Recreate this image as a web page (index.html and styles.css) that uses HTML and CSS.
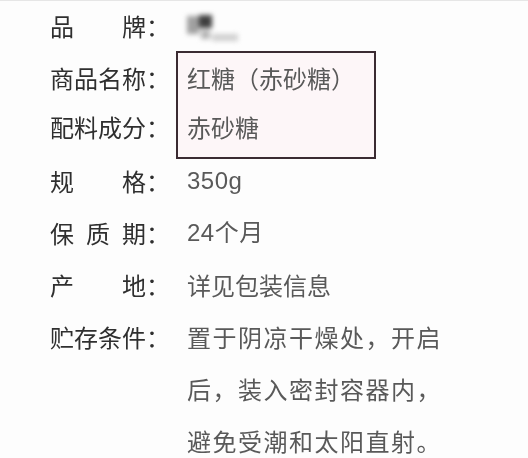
FILE: index.html
```html
<!DOCTYPE html>
<html lang="zh-CN">
<head>
<meta charset="utf-8">
<title>红糖 商品信息</title>
<link rel="stylesheet" href="styles.css">
</head>
<body>
<div class="sheet">
  <div class="row">
    <span class="k"><span class="kj">品牌</span>：</span>
    <span class="v"><span class="brand"><span class="b1"></span><span class="b2"></span><span class="b3"></span></span></span>
  </div>
  <div class="group">
    <div class="keys">
      <div class="k">商品名称：</div>
      <div class="k">配料成分：</div>
    </div>
    <div class="box">
      <div class="bv">红糖（赤砂糖）</div>
      <div class="bv">赤砂糖</div>
    </div>
  </div>
  <div class="row">
    <span class="k"><span class="kj">规格</span>：</span>
    <span class="v num">350g</span>
  </div>
  <div class="row">
    <span class="k"><span class="kj">保质期</span>：</span>
    <span class="v num">24个月</span>
  </div>
  <div class="row">
    <span class="k"><span class="kj">产地</span>：</span>
    <span class="v">详见包装信息</span>
  </div>
  <div class="row">
    <span class="k">贮存条件：</span>
    <div class="v wide">
      <div>置于阴凉干燥处，开启</div>
      <div>后，装入密封容器内，</div>
      <div>避免受潮和太阳直射。</div>
    </div>
  </div>
</div>
</body>
</html>
```
FILE: styles.css
```css
html, body {
  margin: 0;
  padding: 0;
  background: #fdfdfd;
}
body {
  width: 528px;
  height: 458px;
  overflow: hidden;
  font-family: "Noto Sans CJK SC", "Noto Sans", sans-serif;
  font-size: 24px;
  border-top: 1px solid #e6e6e6;
  box-sizing: border-box;
}
.sheet {
  padding-left: 50px;
  display: flex;
  flex-direction: column;
}
.row {
  display: flex;
  align-items: flex-start;
  line-height: 52px;
  height: 52px;
}
.row:first-child {
  height: 50px;
  line-height: 50px;
}
.row:last-child {
  height: auto;
}
.k {
  width: 126px;
  flex: none;
  color: #2f2f2f;
  white-space: nowrap;
  filter: blur(0.35px);
}
.kj {
  display: inline-block;
  width: 96px;
  text-align: justify;
  text-align-last: justify;
  vertical-align: top;
}
.v {
  padding-left: 11px;
  color: #595959;
  white-space: nowrap;
  filter: blur(0.35px);
}
.num {
  font-family: "Liberation Sans", "Noto Sans CJK SC", sans-serif;
  letter-spacing: 0.5px;
}
.wide {
  letter-spacing: 1.5px;
}
.brand {
  display: inline-flex;
  align-items: flex-start;
  height: 30px;
  vertical-align: middle;
  filter: blur(2.5px);
}
.b1 {
  width: 12px;
  height: 18px;
  background: #a0a0a0;
  margin-top: 2px;
}
.b2 {
  width: 13px;
  height: 13px;
  background: #3e3e3e;
  margin-top: 1px;
  box-shadow: 0 13px 0 -2px #b4b4b4;
}
.b3 {
  width: 26px;
  height: 7px;
  background: #cfcfcf;
  margin-top: 20px;
}
.group {
  display: flex;
  align-items: flex-start;
  margin-bottom: -4px;
}
.keys {
  padding-top: 2px;
  line-height: 49px;
}
.box {
  width: 196px;
  border: 2px solid #3b2b32;
  background: #fdf6f8;
  line-height: 49px;
  padding-bottom: 6px;
}
.bv {
  padding-left: 9px;
  color: #595959;
  white-space: nowrap;
  filter: blur(0.35px);
}
```
